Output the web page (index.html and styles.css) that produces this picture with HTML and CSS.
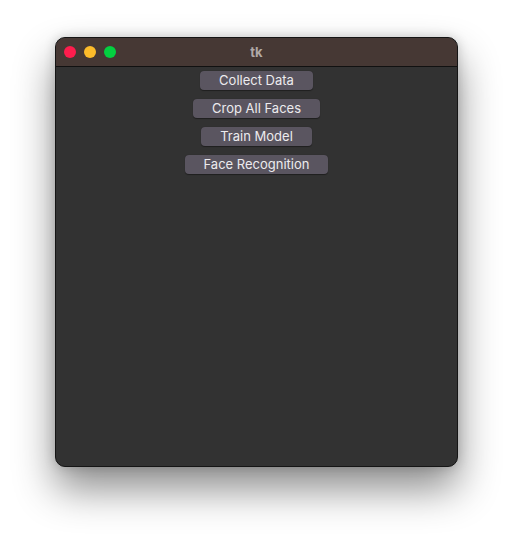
FILE: index.html
```html
<!DOCTYPE html>
<html>
<head>
<meta charset="utf-8">
<link rel="stylesheet" href="styles.css">
</head>
<body>
<div class="window">
  <div class="titlebar">
    <div class="lights">
      <span class="light red"></span>
      <span class="light yellow"></span>
      <span class="light green"></span>
    </div>
    <div class="title">tk</div>
  </div>
  <div class="content">
    <button class="btn">Collect Data</button>
    <button class="btn">Crop All Faces</button>
    <button class="btn">Train Model</button>
    <button class="btn">Face Recognition</button>
  </div>
</div>
</body>
</html>
```
FILE: styles.css
```css
html, body {
  margin: 0;
  padding: 0;
  background: #ffffff;
  font-family: Inter, "Liberation Sans", Arial, sans-serif;
}
body {
  min-height: 540px;
  padding-top: 37px;
  box-sizing: border-box;
}
.window {
  margin: 0 0 0 55px;
  width: 401px;
  height: 428px;
  border-radius: 10px;
  border: 1px solid #151515;
  background: #323232;
  overflow: hidden;
  box-shadow: 0 22px 40px rgba(0,0,0,0.45), 0 0 12px rgba(0,0,0,0.18);
}
.titlebar {
  position: relative;
  height: 28px;
  background: #463834;
  border-bottom: 1px solid #111;
  display: flex;
  align-items: center;
  justify-content: center;
}
.lights {
  position: absolute;
  left: 8px;
  top: 8px;
  display: flex;
  gap: 8px;
}
.light {
  width: 12px;
  height: 12px;
  border-radius: 50%;
  display: block;
}
.red { background: #fe1d4d; }
.yellow { background: #fdbb2a; }
.green { background: #03d040; }
.title {
  color: #b1a9a6;
  font-weight: bold;
  font-size: 13px;
}
.content {
  display: flex;
  flex-direction: column;
  align-items: center;
  padding-top: 4px;
  gap: 9px;
}
.btn {
  height: 19px;
  padding: 0 19px;
  background: #5a5560;
  color: #ecebee;
  border: none;
  border-radius: 4px;
  font-family: Inter, "Liberation Sans", Arial, sans-serif;
  font-size: 13px;
  line-height: 19px;
  box-shadow: 0 0.5px 1px rgba(0,0,0,0.4);
}
```
